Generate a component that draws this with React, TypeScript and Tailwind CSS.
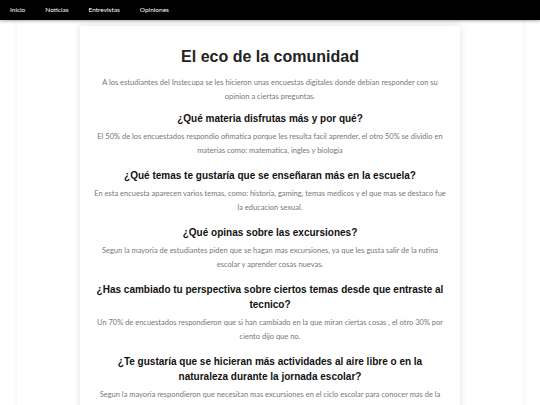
const NAV = ["Inicio", "Noticias", "Entrevistas", "Opiniones"]

const SECTIONS = [
  {
    q: "¿Qué materia disfrutas más y por qué?",
    a: "El 50% de los encuestados respondio ofimatica porque les resulta facil aprender, el otro 50% se dividio en materias como: matematica, ingles y biologia",
  },
  {
    q: "¿Qué temas te gustaría que se enseñaran más en la escuela?",
    a: "En esta encuesta aparecen varios temas, como: historia, gaming, temas medicos y el que mas se destaco fue la educacion sexual.",
  },
  {
    q: "¿Qué opinas sobre las excursiones?",
    a: "Segun la mayoria de estudiantes piden que se hagan mas excursiones, ya que les gusta salir de la rutina escolar y aprender cosas nuevas.",
  },
  {
    q: "¿Has cambiado tu perspectiva sobre ciertos temas desde que entraste al tecnico?",
    a: "Un 70% de encuestados respondieron que si han cambiado en la que miran ciertas cosas , el otro 30% por ciento dijo que no.",
  },
  {
    q: "¿Te gustaría que se hicieran más actividades al aire libre o en la naturaleza durante la jornada escolar?",
    a: "Segun la mayoria respondieron que necesitan mas excursiones en el ciclo escolar para conocer mas de la naturaleza.",
  },
]

export default function App() {
  return (
    <div className="min-h-[405px] bg-white font-['Lato',sans-serif]">
      <nav className="relative z-10 flex h-5 items-center gap-[20px] bg-black pl-[10px] shadow-[0_1px_3px_rgba(0,0,0,0.35)]">
        {NAV.map((item) => (
          <a key={item} className="text-[6.5px] text-white">
            {item}
          </a>
        ))}
      </nav>

      <div className="mx-auto w-[506px] pt-[6px] pb-10 shadow-[0_0_6px_rgba(0,0,0,0.07)]">
        <div className="mx-auto w-[380px] bg-white px-[14px] pt-[20px] pb-6 text-center shadow-[0_0_8px_rgba(0,0,0,0.12)]">
          <h1 className="font-['Liberation_Sans',Arial,sans-serif] text-[16px] leading-[22px] font-bold text-[#222]">
            El eco de la comunidad
          </h1>
          <p className="mt-[8px] text-[7.5px] leading-[13.5px] text-[#777]">
            A los estudiantes del Instecupa se les hicieron unas encuestas digitales donde debian responder con su opinion a ciertas preguntas.
          </p>

          {SECTIONS.map((s, i) => (
            <div key={s.q}>
              <h2
                className={`${i === 0 ? "mt-[8px]" : "mt-[11px]"} font-['Liberation_Sans',Arial,sans-serif] text-[10px] leading-[15px] font-bold text-[#111]`}
              >
                {s.q}
              </h2>
              <p className="mt-[4px] text-[7.5px] leading-[13.5px] text-[#777]">{s.a}</p>
            </div>
          ))}
        </div>
      </div>
    </div>
  )
}
